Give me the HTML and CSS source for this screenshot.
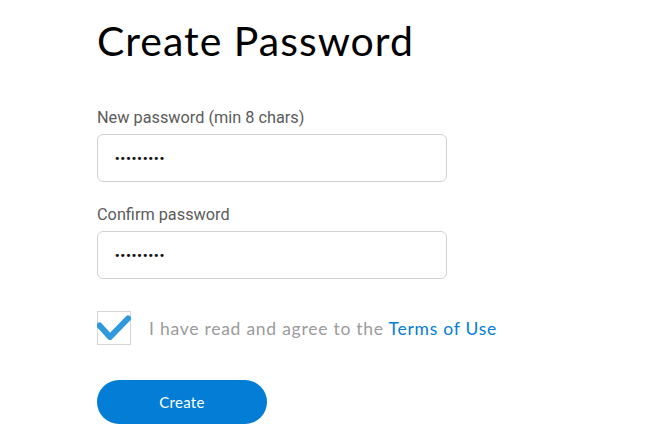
FILE: index.html
```html
<!DOCTYPE html>
<html>
<head>
<meta charset="utf-8">
<link rel="stylesheet" href="styles.css">
</head>
<body>
<main class="page">
  <h1 class="title">Create Password</h1>
  <div class="field">
    <label class="label">New password (min 8 chars)</label>
    <div class="input"><span class="dots">•••••••••</span></div>
  </div>
  <div class="field">
    <label class="label">Confirm password</label>
    <div class="input"><span class="dots">•••••••••</span></div>
  </div>
  <div class="agree">
    <div class="checkbox">
      <svg class="check" width="36" height="32" viewBox="0 0 36 32"><path d="M2.5 13.5 L13 25 L31 6.5" fill="none" stroke="#3098dc" stroke-width="6" stroke-linecap="round" stroke-linejoin="round"/></svg>
    </div>
    <span class="agree-text">I have read and agree to the <a class="link">Terms of Use</a></span>
  </div>
  <button class="btn">Create</button>
</main>
</body>
</html>
```
FILE: styles.css
```css
html, body { margin: 0; padding: 0; background: #fff; }
.page {
  padding: 18px 0 0 97px;
  display: flex;
  flex-direction: column;
  align-items: flex-start;
}
.title {
  margin: 0;
  font-family: "Lato", "Open Sans", sans-serif;
  font-weight: 400;
  font-size: 41px;
  line-height: 46px;
  color: #000;
  letter-spacing: 1px;
}
.field {
  display: flex;
  flex-direction: column;
}
.field:first-of-type { margin-top: 44px; }
.field + .field { margin-top: 23px; }
.label {
  font-family: "Roboto", sans-serif;
  font-size: 16.3px;
  line-height: 19px;
  color: #5b5b5b;
  margin-bottom: 7px;
}
.input {
  box-sizing: border-box;
  width: 350px;
  height: 48px;
  border: 1px solid #d2d2d2;
  border-radius: 6px;
  display: flex;
  align-items: center;
  padding-left: 16px;
}
.dots {
  font-family: "DejaVu Sans", sans-serif;
  font-size: 11px;
  letter-spacing: -0.9px;
  color: #111;
}
.agree {
  display: flex;
  align-items: center;
  margin-top: 32px;
}
.checkbox {
  position: relative;
  box-sizing: border-box;
  width: 34px;
  height: 34px;
  border: 1px solid #d4d4d4;
  flex: none;
}
.check { position: absolute; left: -1px; top: 0; }
.agree-text {
  margin-left: 18px;
  font-family: "Lato", "Open Sans", sans-serif;
  font-size: 17.5px;
  letter-spacing: 0.75px;
  color: #9b9b9b;
}
.link { color: #037dd6; }
.btn {
  margin-top: 35px;
  width: 170px;
  height: 44px;
  border: none;
  border-radius: 22px;
  background: #037dd6;
  color: #fff;
  font-family: "Lato", sans-serif;
  font-size: 15px;
  letter-spacing: 0.3px;
  padding: 0;
}
```
